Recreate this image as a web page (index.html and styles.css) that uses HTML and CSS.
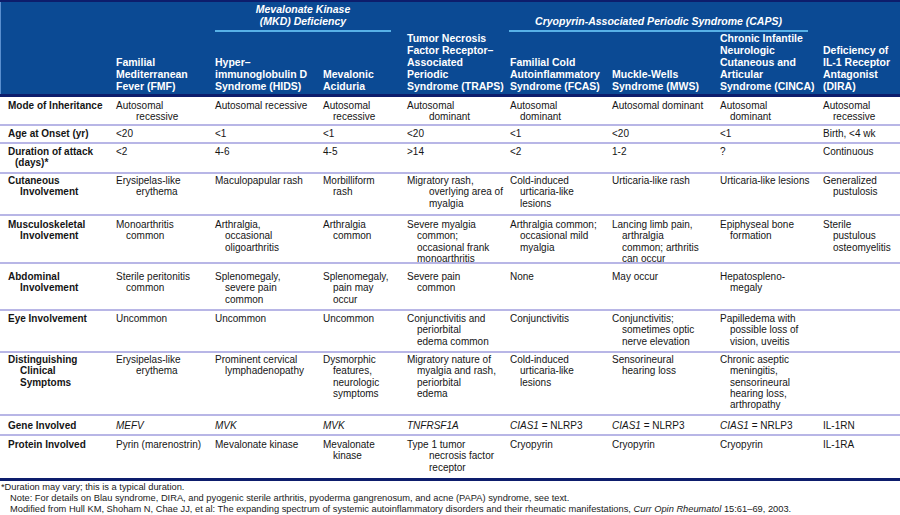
FILE: index.html
```html
<!DOCTYPE html>
<html lang="en">
<head>
<meta charset="utf-8">
<title>Autoinflammatory syndromes</title>
<link rel="stylesheet" href="styles.css">
</head>
<body>
<div class="sheet">
  <div class="cols head">
    <div class="grp grp-mkd">Mevalonate Kinase<br>(MKD) Deficiency</div>
    <div class="grp grp-caps">Cryopyrin-Associated Periodic Syndrome (CAPS)</div>
    <div class="hc h0"></div>
    <div class="hc h1">Familial<br>Mediterranean<br>Fever (FMF)</div>
    <div class="hc h2">Hyper–<br>immunoglobulin D<br>Syndrome (HIDS)</div>
    <div class="hc h3">Mevalonic<br>Aciduria</div>
    <div class="hc h4">Tumor Necrosis<br>Factor Receptor–<br>Associated<br>Periodic<br>Syndrome (TRAPS)</div>
    <div class="hc h5">Familial Cold<br>Autoinflammatory<br>Syndrome (FCAS)</div>
    <div class="hc h6">Muckle-Wells<br>Syndrome (MWS)</div>
    <div class="hc h7">Chronic Infantile<br>Neurologic<br>Cutaneous and<br>Articular<br>Syndrome (CINCA)</div>
    <div class="hc h8">Deficiency of<br>IL-1 Receptor<br>Antagonist<br>(DIRA)</div>
  </div>

  <div class="cols row r1">
    <div class="c l">Mode of Inheritance</div>
    <div class="c i20">Autosomal<br>recessive</div>
    <div class="c">Autosomal recessive</div>
    <div class="c">Autosomal<br>recessive</div>
    <div class="c i22">Autosomal<br>dominant</div>
    <div class="c">Autosomal<br>dominant</div>
    <div class="c">Autosomal dominant</div>
    <div class="c">Autosomal<br>dominant</div>
    <div class="c">Autosomal<br>recessive</div>
  </div>

  <div class="cols row r2">
    <div class="c l">Age at Onset (yr)</div>
    <div class="c">&lt;20</div>
    <div class="c">&lt;1</div>
    <div class="c">&lt;1</div>
    <div class="c">&lt;20</div>
    <div class="c">&lt;1</div>
    <div class="c">&lt;20</div>
    <div class="c">&lt;1</div>
    <div class="c">Birth, &lt;4 wk</div>
  </div>

  <div class="cols row r3">
    <div class="c l i7">Duration of attack<br>(days)*</div>
    <div class="c">&lt;2</div>
    <div class="c">4-6</div>
    <div class="c">4-5</div>
    <div class="c">&gt;14</div>
    <div class="c">&lt;2</div>
    <div class="c">1-2</div>
    <div class="c">?</div>
    <div class="c">Continuous</div>
  </div>

  <div class="cols row r4">
    <div class="c l">Cutaneous<br>Involvement</div>
    <div class="c i20">Erysipelas-like<br>erythema</div>
    <div class="c">Maculopapular rash</div>
    <div class="c">Morbilliform<br>rash</div>
    <div class="c i22">Migratory rash,<br>overlying area of<br>myalgia</div>
    <div class="c">Cold-induced<br>urticaria-like<br>lesions</div>
    <div class="c">Urticaria-like rash</div>
    <div class="c">Urticaria-like lesions</div>
    <div class="c">Generalized<br>pustulosis</div>
  </div>

  <div class="cols row r5">
    <div class="c l">Musculoskeletal<br>Involvement</div>
    <div class="c">Monoarthritis<br>common</div>
    <div class="c">Arthralgia,<br>occasional<br>oligoarthritis</div>
    <div class="c">Arthralgia<br>common</div>
    <div class="c">Severe myalgia<br>common;<br>occasional frank<br>monoarthritis</div>
    <div class="c">Arthralgia common;<br>occasional mild<br>myalgia</div>
    <div class="c">Lancing limb pain,<br>arthralgia<br>common; arthritis<br>can occur</div>
    <div class="c">Epiphyseal bone<br>formation</div>
    <div class="c">Sterile<br>pustulous<br>osteomyelitis</div>
  </div>

  <div class="cols row r6">
    <div class="c l">Abdominal<br>Involvement</div>
    <div class="c">Sterile peritonitis<br>common</div>
    <div class="c">Splenomegaly,<br>severe pain<br>common</div>
    <div class="c">Splenomegaly,<br>pain may<br>occur</div>
    <div class="c">Severe pain<br>common</div>
    <div class="c">None</div>
    <div class="c">May occur</div>
    <div class="c">Hepatospleno-<br>megaly</div>
    <div class="c"></div>
  </div>

  <div class="cols row r7">
    <div class="c l">Eye Involvement</div>
    <div class="c">Uncommon</div>
    <div class="c">Uncommon</div>
    <div class="c">Uncommon</div>
    <div class="c">Conjunctivitis and<br>periorbital<br>edema common</div>
    <div class="c">Conjunctivitis</div>
    <div class="c">Conjunctivitis;<br>sometimes optic<br>nerve elevation</div>
    <div class="c">Papilledema with<br>possible loss of<br>vision, uveitis</div>
    <div class="c"></div>
  </div>

  <div class="cols row r8">
    <div class="c l">Distinguishing<br>Clinical<br>Symptoms</div>
    <div class="c i20">Erysipelas-like<br>erythema</div>
    <div class="c">Prominent cervical<br>lymphadenopathy</div>
    <div class="c">Dysmorphic<br>features,<br>neurologic<br>symptoms</div>
    <div class="c">Migratory nature of<br>myalgia and rash,<br>periorbital<br>edema</div>
    <div class="c">Cold-induced<br>urticaria-like<br>lesions</div>
    <div class="c">Sensorineural<br>hearing loss</div>
    <div class="c">Chronic aseptic<br>meningitis,<br>sensorineural<br>hearing loss,<br>arthropathy</div>
    <div class="c"></div>
  </div>

  <div class="cols row r9">
    <div class="c l">Gene Involved</div>
    <div class="c"><i>MEFV</i></div>
    <div class="c"><i>MVK</i></div>
    <div class="c"><i>MVK</i></div>
    <div class="c"><i>TNFRSF1A</i></div>
    <div class="c"><i>CIAS1</i> = NLRP3</div>
    <div class="c"><i>CIAS1</i> = NLRP3</div>
    <div class="c"><i>CIAS1</i> = NRLP3</div>
    <div class="c">IL-1RN</div>
  </div>

  <div class="cols row r10">
    <div class="c l">Protein Involved</div>
    <div class="c">Pyrin (marenostrin)</div>
    <div class="c">Mevalonate kinase</div>
    <div class="c">Mevalonate<br>kinase</div>
    <div class="c i22">Type 1 tumor<br>necrosis factor<br>receptor</div>
    <div class="c">Cryopyrin</div>
    <div class="c">Cryopyrin</div>
    <div class="c">Cryopyrin</div>
    <div class="c">IL-1RA</div>
  </div>

  <div class="notes">
    <p class="first">*Duration may vary; this is a typical duration.</p>
    <p>Note: For details on Blau syndrome, DIRA, and pyogenic sterile arthritis, pyoderma gangrenosum, and acne (PAPA) syndrome, see text.</p>
    <p>Modified from Hull KM, Shoham N, Chae JJ, et al: The expanding spectrum of systemic autoinflammatory disorders and their rheumatic manifestations, <i>Curr Opin Rheumatol</i> 15:61–69, 2003.</p>
  </div>
</div>
</body>
</html>
```

FILE: styles.css
```css
* {
  box-sizing: border-box;
}

body {
  margin: 0;
  background: #ffffff;
  font-family: "Liberation Sans", Arial, sans-serif;
  color: #151515;
}

.sheet {
  width: 900px;
}

.cols {
  display: grid;
  grid-template-columns: 112px 99px 108px 84px 103px 102px 108px 103px 81px;
}

/* ---------- header ---------- */
.head {
  height: 97px;
  grid-template-rows: 30px 62px;
  background: #0b4a94;
  border-top: 2px solid #0d1d6c;
  border-bottom: 3px solid #0d1d6c;
  box-shadow: inset 1px 0 0 #5a8fcf;
  color: #ffffff;
  font-weight: bold;
  font-size: 10.5px;
  line-height: 12px;
}

.hc {
  grid-row: 1 / 3;
  align-self: end;
  padding: 0 0 2px 4px;
  white-space: nowrap;
}

.h0 { grid-column: 1; }
.h1 { grid-column: 2; }
.h2 { grid-column: 3; }
.h3 { grid-column: 4; }
.h4 { grid-column: 5; }
.h5 { grid-column: 6; }
.h6 { grid-column: 7; }
.h7 { grid-column: 8; }
.h8 { grid-column: 9; }

.grp {
  grid-row: 1;
  align-self: end;
  position: relative;
  z-index: 1;
  font-style: italic;
  text-align: center;
  white-space: nowrap;
  padding-bottom: 3px;
  border-bottom: 2px solid #58b1e7;
}

.grp-mkd {
  grid-column: 3 / 5;
  margin: 0 12px 0 4px;
}

.grp-caps {
  grid-column: 6 / 9;
  margin: 0 11px 0 3px;
}

/* ---------- body rows ---------- */
.row {
  border-bottom: 2px solid #b8b6e6;
  font-size: 10px;
  line-height: 11.3px;
}

.c {
  padding-left: 14px;
  text-indent: -10px;
  white-space: nowrap;
}

.c.l {
  padding-left: 20px;
  text-indent: -12px;
  font-weight: bold;
}

.c.l.i7 {
  padding-left: 15px;
  text-indent: -7px;
}

.c.i20 {
  padding-left: 24px;
  text-indent: -20px;
}

.c.i22 {
  padding-left: 26px;
  text-indent: -22px;
}

.r1 { height: 29px; padding-top: 3px; }
.r2 { height: 18px; padding-top: 2px; }
.r3 { height: 30px; padding-top: 2px; }
.r4 { height: 42px; padding-top: 1px; }
.r5 { height: 48px; padding-top: 3px; }
.r6 { height: 47px; padding-top: 7px; }
.r7 { height: 42px; padding-top: 2px; }
.r8 { height: 63px; padding-top: 1px; }
.r9 { height: 20px; padding-top: 4px; }
.r10 {
  height: 45px;
  padding-top: 3px;
  border-bottom: 3px solid #0d1d6c;
}

/* ---------- notes ---------- */
.notes {
  padding-top: 1px;
  font-size: 9.3px;
  line-height: 11px;
  color: #1a1a1a;
}

.notes p {
  margin: 0;
  padding-left: 10px;
  white-space: nowrap;
}

.notes p.first {
  padding-left: 1px;
}
```
